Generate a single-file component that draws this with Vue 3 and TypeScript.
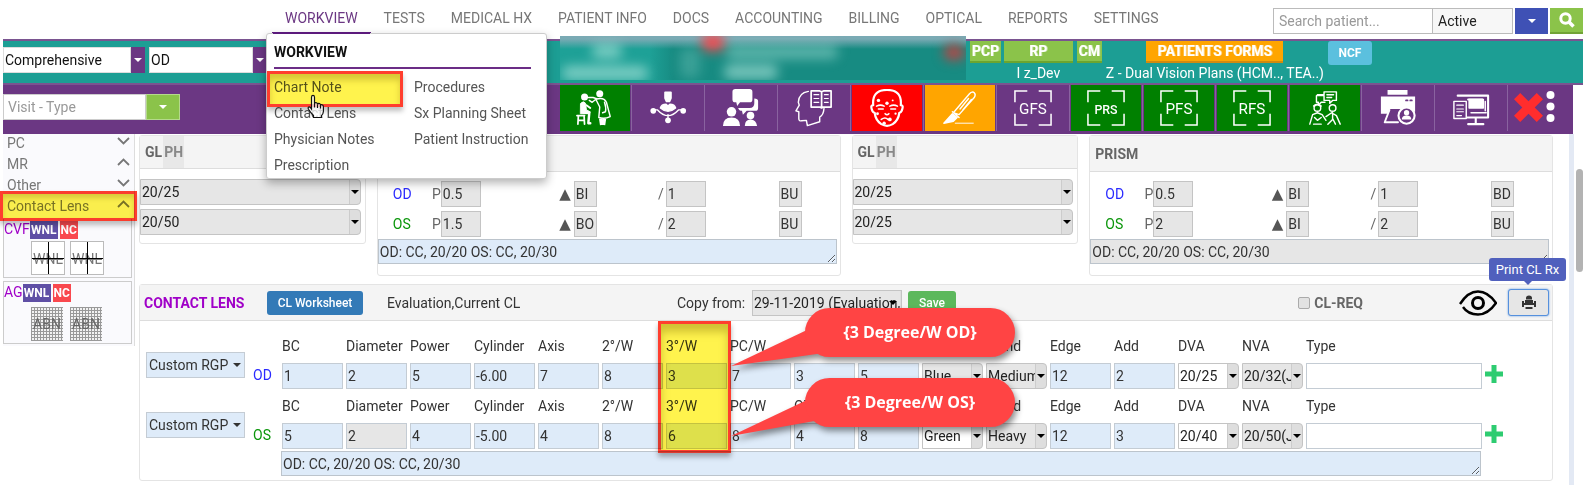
<script setup lang="ts">
import { ref } from 'vue'

interface Field {
  label: string
  value: string
  kind?: 'combo' | 'plain'
  grey?: boolean
}
interface Prism { eye: string; p: string; h: string; v: string; dir: string }

const navItems = ['WORKVIEW', 'TESTS', 'MEDICAL HX', 'PATIENT INFO', 'DOCS', 'ACCOUNTING', 'BILLING', 'OPTICAL', 'REPORTS', 'SETTINGS']
const menuLeft = ['Chart Note', 'Contact Lens', 'Physician Notes', 'Prescription']
const menuRight = ['Procedures', 'Sx Planning Sheet', 'Patient Instruction']

const tools: { id: string; tone?: string; text?: string }[] = [
  { id: 'exam', tone: 'green' },
  { id: 'network' },
  { id: 'chat' },
  { id: 'education' },
  { id: 'face', tone: 'red' },
  { id: 'scalpel', tone: 'orange' },
  { id: 'frame', text: 'GFS' },
  { id: 'frame', text: 'PRS', tone: 'green' },
  { id: 'frame', text: 'PFS', tone: 'green' },
  { id: 'frame', text: 'RFS', tone: 'green' },
  { id: 'talk', tone: 'green' },
  { id: 'printer' },
  { id: 'monitor' },
]

const sections = [
  { name: 'PC', open: false },
  { name: 'MR', open: true },
  { name: 'Other', open: false },
  { name: 'Contact Lens', open: true },
]

const acuity = [['20/25', '20/50'], ['20/25', '20/25']]
const prisms: Prism[][] = [
  [
    { eye: 'OD', p: '0.5', h: 'BI', v: '1', dir: 'BU' },
    { eye: 'OS', p: '1.5', h: 'BO', v: '2', dir: 'BU' },
  ],
  [
    { eye: 'OD', p: '0.5', h: 'BI', v: '1', dir: 'BD' },
    { eye: 'OS', p: '2', h: 'BI', v: '2', dir: 'BU' },
  ],
]
const summary = 'OD: CC, 20/20 OS: CC, 20/30'

const labels = ['BC', 'Diameter', 'Power', 'Cylinder', 'Axis', '2°/W', '3°/W', 'PC/W', 'OZ', 'CT', 'Color', 'Blend', 'Edge', 'Add', 'DVA', 'NVA', 'Type']
const unlabelled = ['CT', 'Color']

function makeRow(values: string[], greyAt: number[]): Field[] {
  return labels.map((label, i) => ({
    label,
    value: values[i] ?? '',
    kind: [10, 11, 14, 15].includes(i) ? 'combo' : i === 16 ? 'plain' : undefined,
    grey: greyAt.includes(i),
  }))
}

const lensRows = ref([
  { eye: 'OD', fields: makeRow(['1', '2', '5', '-6.00', '7', '8', '3', '7', '3', '5', 'Blue', 'Medium', '12', '2', '20/25', '20/32(J2)', ''], [10, 11, 15]) },
  { eye: 'OS', fields: makeRow(['5', '2', '4', '-5.00', '4', '8', '6', '8', '4', '8', 'Green', 'Heavy', '12', '3', '20/40', '20/50(J5)', ''], [1, 11, 15]) },
])
</script>

<template>
  <div class="page">
    <header class="topbar">
      <nav class="nav">
        <a v-for="(item, i) in navItems" :key="item" href="#" :class="{ active: i === 0 }">{{ item }}</a>
        <div class="menu">
          <h2>WORKVIEW</h2>
          <div class="menu-cols">
            <div><a v-for="m in menuLeft" :key="m" href="#">{{ m }}</a></div>
            <div><a v-for="m in menuRight" :key="m" href="#">{{ m }}</a></div>
          </div>
          <div class="mark mark-menu"></div>
          <svg class="cursor" width="20" height="26" viewBox="0 0 20 26">
            <path d="M4.500 15V3.200Q4.600 1.300 6 1.300T7.500 3.200V10Q8 8.300 9.500 8.800Q10.500 9.200 10.500 10.500Q11.200 9 12.600 9.500Q13.500 10 13.500 11.300Q14.400 10.300 15.500 11Q16.500 11.600 16.400 13V17.500Q16.200 20 14.500 21.500V23.500H6.500V21.500Q3.500 18.500 1.500 15.200Q.6 13.500 1.800 13Q3 12.600 4.500 15Z" fill="rgba(255,255,255,.75)" stroke="#111" stroke-width="1.200" />
            <path d="M10.500 10.500V14M13.500 11.500V14.500M7.500 10V13.500" stroke="#111" stroke-width="1.200" />
          </svg>
        </div>
      </nav>
      <form class="search" @submit.prevent>
        <input type="text" placeholder="Search patient..." aria-label="Search patient" />
        <select aria-label="Patient status"><option>Active</option></select>
        <button type="button" class="blue" aria-label="Search options"><i class="caret"></i></button>
        <button type="submit" class="lime" aria-label="Search">
          <svg width="16" height="16" viewBox="0 0 16 16" fill="none" stroke="#fff"><circle cx="6.500" cy="6.500" r="4.700" stroke-width="3" /><path d="M10 10l4.500 4.500" stroke-width="3.500" /></svg>
        </button>
      </form>
    </header>

    <div class="patient">
      <span class="pick exam-type"><select aria-label="Exam type"><option>Comprehensive</option></select><i class="caret"></i></span>
      <span class="pick eye-side"><select aria-label="Eye"><option>OD</option></select><i class="caret"></i></span>
      <div class="hidden-info">
        <div class="smear">
          <i class="s1"></i><i class="s2"></i><i class="s3"></i><i class="s4"></i><i class="s5"></i><i class="s6"></i><i class="s7"></i>
        </div>
      </div>
      <div class="info">
        <button type="button" class="tag pcp">PCP</button>
        <div class="stack rp"><button type="button" class="tag">RP</button><span>I z_Dev</span></div>
        <button type="button" class="tag cm">CM</button>
        <div class="stack forms"><button type="button" class="tag orange">PATIENTS FORMS</button><span>Z - Dual Vision Plans (HCM.., TEA..)</span></div>
        <button type="button" class="ncf">NCF</button>
      </div>
    </div>

    <div class="toolbar">
      <div class="visit">
        <input type="text" placeholder="Visit - Type" aria-label="Visit type" />
        <button type="button" aria-label="Choose visit type"><i class="caret"></i></button>
      </div>
      <div class="tools">
        <div v-for="(t, i) in tools" :key="i" class="cell">
          <button type="button" :class="t.tone" :aria-label="t.text ?? t.id">
            <svg width="40" height="40" viewBox="0 0 40 40" fill="none" stroke="#fff" stroke-width="1.500" stroke-linecap="round" stroke-linejoin="round">
              <g v-if="t.id === 'exam'">
                <circle cx="9" cy="8.500" r="3.700" fill="#fff" stroke="none" />
                <path d="M5 15q3-3 5 0l1 7 4 2-1 2-9 0z" fill="#fff" stroke-width="1" /><path d="M8 25h6l-1 11h2" stroke-width="2.600" /><path d="M11 17l4 3" stroke-width="2" />
                <path d="M1 28h8M2.500 28L2 37M8.500 28L9 37M2.500 33h6" stroke-width="1.800" />
                <circle cx="25" cy="5" r="3.700" fill="#fff" stroke="none" />
                <path d="M13 9h5l3 1M22 10l-5 4-3-2M21 11q8-3 11 3l4 15q-6 3-12 1l1-11-4-8" />
                <path d="M30 14q2 6 1 10l-3 1" /><path d="M26 31l1 7M30 31l-1 7" stroke-width="3.600" stroke-linecap="butt" />
              </g>
              <g v-else-if="t.id === 'network'">
                <path d="M17 3.500h6v6l-1.500 3.500h-3l-1.500-3.500z" fill="#fff" stroke-width="2" />
                <path d="M12 20q1-4 6-4l2 2 2-2q5 0 6 4-8 7-16 0" fill="#fff" /><path d="M4 22h5q11 12 22 0h5M20 27v6" />
                <g fill="#fff" stroke="none"><circle cx="4.500" cy="23" r="3" /><circle cx="36" cy="23" r="3" /><circle cx="20" cy="33" r="3" /></g>
              </g>
              <g v-else-if="t.id === 'chat'" fill="#fff" stroke="none">
                <path d="M14 0h15q3 0 3 3v8q0 3-3 3H19l-3 4-1-4h-1q-3 0-3-3V3q0-3 3-3z" />
                <path d="M34 10q4 0 4 3v7q0 3-3 3h-9l-4 4-1-4q-3 0-4-3h12q5 0 5-5z" />
                <circle cx="10" cy="24" r="5" /><path d="M1 39q0-9 9-9t9 9z" /><circle cx="30" cy="28" r="4" /><path d="M24 39q0-7 6-7t7 7z" />
              </g>
              <g v-else-if="t.id === 'education'">
                <path d="M14 2.500Q4 4 3.500 14l1 3-3.500 6 3 1v7q0 3 3 2.500l5-.5 1 5.500 13-4v-5q4-2 4.500-9" />
                <path d="M17 2h9l2 1 2-1h8v17h-8l-2 1-2-1h-9zM28 3v17" stroke-width="1.800" /><path d="M20 6h5M20 10h5M20 14h5M31 6h4M31 10h4M31 14h4" stroke-width="1.300" />
              </g>
              <g v-else-if="t.id === 'face'">
                <path d="M5.500 17Q4 1 20 1t14.500 16M5.500 17q-3 0-1.500 4.500 1 3.500 3 3.500 1 8 7 12 6 3.500 12 0 6-4 7-12 2 0 3-3.500 1.500-4.500-1.500-4.500" stroke-width="2.300" />
                <path d="M9 18q4-2 8 0M23 18q4-2 8 0M11 21h5M24 21h5M18 26q2 2 4 0M14 32q4-3 7 0" stroke-width="1.700" />
                <g fill="#fff" stroke="none"><circle cx="11" cy="12" r="1.800" /><circle cx="20" cy="15" r="1.800" /><circle cx="26" cy="12" r="1" /><circle cx="10" cy="26" r="1.500" /><circle cx="23" cy="32" r="2" /><circle cx="17" cy="36" r="1.800" /><circle cx="29" cy="26" r="1.200" /></g>
              </g>
              <g v-else-if="t.id === 'scalpel'">
                <path d="M13 25L30 5q3-3 5-1t0 5L19 27zM12 24l7 6M20 21l9-11M23 22L32 11" /><path d="M3 36l9-10 5 4-4 4z" fill="#fff" /><path d="M15 36h19" stroke-width="1" />
              </g>
              <g v-else-if="t.id === 'frame'">
                <path d="M1 14V2h13M26 2h13v12M39 26v12H26M14 38H1V26" stroke-linecap="butt" stroke-linejoin="miter" stroke-width="1.600" />
                <text x="20" y="26" text-anchor="middle" fill="#fff" stroke="none" :class="{ small: t.text === 'PRS' }">{{ t.text }}</text>
              </g>
              <g v-else-if="t.id === 'talk'">
                <path d="M16 5v-1h7V1h13v9h-4l-3 3v-3h-6V5h-8v7h2v3l3-3h4M26 4h7M26 7h5" transform="translate(-4 2)" />
                <circle cx="12" cy="20" r="3.500" /><circle cx="28" cy="20" r="3.500" /><path d="M8 18q4-4 8 0" />
                <path d="M4 37l3-10 5-2 5 2 4 6M9 30l3 3 4-3M8 37h8M21 29l6-4 5 3 4 9M28 25v7l-5 5M28 31l3 6" />
              </g>
              <g v-else-if="t.id === 'printer'">
                <path d="M9 1h21v5H9zM2 8h36v16H29l-2-3H11l-2 5H2z" fill="#fff" stroke="none" />
                <path d="M11 22L6 35h14" stroke-width="2" /><path d="M28.500 12h1.500M33 12h1.500" stroke="#6b3783" stroke-width="2" />
                <circle cx="29" cy="28" r="8.500" fill="#6b3783" stroke-width="2.200" /><circle cx="29" cy="25" r="2.800" fill="#fff" stroke="none" /><path d="M24 32q0-4 5-4t5 4z" fill="#fff" stroke="none" />
              </g>
              <g v-else>
                <path d="M6 7h32v23H17M17 11h15M15 30h23M25 30v7M17 37h16" stroke-width="2.200" /><path d="M18 11h15v9H18z" fill="#fff" /><path d="M35 13v10M20 25h16" />
                <path d="M2 13h13v18H2z" fill="#6b3783" /><path d="M5 17h7M5 21h7M5 24h7M5 28h5" stroke-width="1.200" />
              </g>
            </svg>
          </button>
        </div>
        <div class="end">
          <button type="button" aria-label="Close"><svg width="29" height="29" viewBox="0 0 28 28"><path d="M6 0l8 8 8-8 6 6-8 8 8 8-6 6-8-8-8 8-6-6 8-8-8-8z" fill="#ff2d2d" /></svg></button>
          <button type="button" aria-label="More"><svg width="9" height="32" viewBox="0 0 8 32" fill="#fff"><circle cx="4" cy="4" r="4" /><circle cx="4" cy="15.500" r="4" /><circle cx="4" cy="27" r="4" /></svg></button>
        </div>
      </div>
    </div>

    <div class="content">
      <aside class="side">
        <div class="sections">
          <button v-for="s in sections" :key="s.name" type="button">
            {{ s.name }}
            <svg width="13" height="8" viewBox="0 0 13 8" fill="none" stroke="#777" stroke-width="1.800"><path :d="s.open ? 'M1 7l5.500-5.500L12 7' : 'M1 1l5.500 5.500L12 1'" /></svg>
          </button>
          <div class="mark mark-side"></div>
        </div>
        <div class="box">
          <div class="box-head"><b>CVF</b><button type="button" class="wnl">WNL</button><button type="button" class="nc">NC</button></div>
          <div class="tiles"><span v-for="n in 2" :key="n" class="tile cross">WNL</span></div>
        </div>
        <div class="box">
          <div class="box-head"><b>AG</b><button type="button" class="wnl">WNL</button><button type="button" class="nc">NC</button></div>
          <div class="tiles"><span v-for="n in 2" :key="n" class="tile mesh">ABN</span></div>
        </div>
      </aside>

      <main class="main">
        <div class="panels">
          <template v-for="(set, i) in prisms" :key="i">
            <section class="panel glare">
              <div class="head"><b>GL</b><b class="ph">PH</b></div>
              <div class="glare-body">
                <span v-for="(v, k) in acuity[i]" :key="k" class="combo grey"><select :aria-label="'GL ' + (k ? 'OS' : 'OD')"><option>{{ v }}</option></select><i class="caret"></i></span>
              </div>
            </section>
            <section class="panel prism">
              <div class="head"><b>PRISM</b></div>
              <div class="prism-body">
                <div v-for="r in set" :key="r.eye" class="prism-row">
                  <span :class="['eye', r.eye]">{{ r.eye }}</span>
                  <label class="g1"><span>P</span><input class="w40" type="text" :value="r.p" /></label>
                  <label class="g2"><span class="up">▲</span><input class="w23" type="text" :value="r.h" /></label>
                  <label class="g3"><span>/</span><input class="w40" type="text" :value="r.v" /></label>
                  <input class="w23 dir" type="text" :value="r.dir" aria-label="Vertical base" />
                </div>
              </div>
              <textarea :class="{ grey: i === 1 }" aria-label="Prism summary" :value="summary"></textarea>
            </section>
          </template>
        </div>

        <section class="panel lens">
          <div class="lens-head">
            <h3>CONTACT LENS</h3>
            <button type="button" class="worksheet">CL Worksheet</button>
            <span class="evaluation">Evaluation,Current CL</span>
            <label class="copy" for="copy">Copy from:</label>
            <span class="combo grey copy-pick"><select id="copy"><option>29-11-2019 (Evaluation,Current CL)</option></select><i class="caret"></i></span>
            <button type="button" class="save">Save</button>
            <label class="req"><input type="checkbox" />CL-REQ</label>
            <svg class="eye-icon" width="38" height="26" viewBox="0 0 38 26" fill="none" stroke="#000" stroke-width="2.400"><path d="M1 14Q9 1.500 19 1.500T37 13Q29 24.500 19 24.500 9 24.500 4 17" /><circle cx="19" cy="13" r="5.500" stroke-width="3" /></svg>
            <div class="print-wrap">
              <button type="button" class="print" aria-label="Print CL Rx">
                <svg width="16" height="16" viewBox="0 0 16 16" fill="#333"><path d="M5 4.500V3q0-2.500 3-2.500T11 3v1.500zM1 6h2v2h10V6h2v6h-2V10H3v2H1zM4 5h8v3H4zM4.500 12h7v2h-7z" /></svg>
              </button>
              <div class="tip" role="tooltip">Print CL Rx</div>
            </div>
          </div>
          <div class="lens-body">
            <div v-for="row in lensRows" :key="row.eye" class="lens-row">
              <button type="button" class="brand">Custom RGP<i class="caret"></i></button>
              <span :class="['eye', row.eye]">{{ row.eye }}</span>
              <div class="fields">
                <div v-for="f in row.fields" :key="f.label" class="field">
                  <label :for="row.eye + f.label" :aria-label="f.label">{{ unlabelled.includes(f.label) ? '&nbsp;' : f.label }}</label>
                  <span v-if="f.kind === 'combo'" :class="['combo', { grey: f.grey }]"><input :id="row.eye + f.label" v-model="f.value" type="text" /><i class="caret"></i></span>
                  <input v-else :id="row.eye + f.label" v-model="f.value" type="text" :class="{ grey: f.grey, plain: f.kind === 'plain' }" />
                </div>
              </div>
              <button type="button" class="plus" aria-label="Add lens"><svg width="18" height="18" viewBox="0 0 18 18"><path d="M6.500 0h5v6.500H18v5h-6.500V18h-5v-6.500H0v-5h6.500z" fill="#2ecc71" /></svg></button>
            </div>
            <textarea class="notes" aria-label="Lens summary" :value="summary"></textarea>
            <div class="mark mark-col"></div>
            <div class="callout first"><svg width="120" height="60" viewBox="0 0 120 60"><path d="M0 58L76 22 100 44Z" fill="#ff4444" /></svg><span>{3 Degree/W OD}</span></div>
            <div class="callout second"><svg width="120" height="60" viewBox="0 0 120 60"><path d="M0 58L76 22 100 40Z" fill="#ff4444" /></svg><span>{3 Degree/W OS}</span></div>
          </div>
        </section>
      </main>
      <div class="rail"></div>
    </div>
  </div>
</template>

<style>
body { margin: 0; background: #fff; overflow: hidden; }
</style>

<style scoped>
* { box-sizing: border-box; }
.page { font-family: Roboto, "Liberation Sans", sans-serif; font-size: 14px; line-height: 20px; color: #333; }
button, input, select, textarea { font: inherit; color: inherit; margin: 0; padding: 0; border: 0; border-radius: 0; outline: 0; }
button { background: none; cursor: pointer; }
select { appearance: none; }
a { color: inherit; text-decoration: none; }
.caret { display: block; border: 4px solid transparent; border-top-color: currentColor; border-bottom-width: 0; width: 0; height: 0; pointer-events: none; flex: none; }

.topbar { display: flex; justify-content: space-between; height: 39px; padding-left: 272px; }
.nav { position: relative; display: flex; height: 34px; }
.nav > a { padding: 8px 13px 4px; color: #777; white-space: nowrap; border-bottom: 2px solid transparent; }
.nav > a.active { color: #6b3783; border-color: #5b1a7c; }
.menu { position: absolute; z-index: 5; left: -6px; top: 33px; width: 281px; height: 146px; background: #fff; border: 1px solid #ccc; border-radius: 3px; box-shadow: 0 4px 10px rgba(0, 0, 0, .3); padding: 8px 15px 0 7px; }
.menu::before { content: ""; position: absolute; left: 6px; top: -2px; width: 97px; height: 2px; background: #5b1a7c; }
.menu h2 { margin: 0; font-size: 14px; line-height: 20px; font-weight: 700; color: #111; padding-bottom: 5px; border-bottom: 2px solid #6b2d86; }
.menu-cols { display: grid; grid-template-columns: 140px 1fr; padding-top: 5px; }
.menu-cols a { display: block; line-height: 26px; color: #555; white-space: nowrap; }
.mark { position: absolute; border: 3px solid #ff3e2e; background: #fff34d; mix-blend-mode: multiply; box-shadow: inset 0 6px 6px rgba(120, 100, 0, .25); pointer-events: none; }
.mark-menu { left: 0; top: 37px; width: 136px; height: 36px; box-shadow: inset 0 6px 6px rgba(120, 100, 0, .3), 0 4px 5px rgba(0, 0, 0, .25); }
.cursor { position: absolute; left: 40px; top: 60px; }

.search { display: flex; padding: 8px 0 5px; height: 39px; }
.search input { width: 160px; border: 1px solid #bbb; padding-left: 5px; }
.search input::placeholder, .visit input::placeholder { color: #999; opacity: 1; }
.search select { width: 80px; border: 1px solid #bbb; border-left: 0; background: #f7f7f7; padding-left: 5px; color: #222; }
.search button { width: 33px; margin-left: 2px; display: grid; place-items: center; color: #fff; }
.search .blue { background: #3f51b5; }
.search .lime { background: #8bc34a; border-bottom: 2px solid #71a336; }

.patient { position: relative; display: flex; align-items: flex-start; height: 46px; margin-left: 3px; background: #1c9e94; border-top: 2px solid #7a5490; border-bottom: 2px solid #7a5490; }
.pick { display: flex; align-items: center; height: 26px; margin: 6px 4px 0 0; background: #6b3783; color: #fff; padding-right: 3px; }
.pick select { flex: 1; height: 26px; background: #fff; color: #111; border: 1px solid #ddd; padding-left: 1px; margin-right: 3px; }
.exam-type { width: 142px; }
.eye-side { width: 118px; }
.hidden-info { position: absolute; left: 557px; top: -5px; width: 406px; height: 44px; overflow: hidden; background: linear-gradient(#7aaab4 0, #7aaab4 3px, rgba(28, 150, 140, 0) 13px), linear-gradient(90deg, #1ea197 22%, #178b82 28%); }
.smear { position: absolute; inset: 0; filter: blur(6px); }
.smear i { position: absolute; border-radius: 6px; background: rgba(165, 225, 215, .7); }
.smear .s1 { left: 32px; top: 8px; width: 30px; height: 14px; }
.smear .s2 { left: 2px; top: 30px; width: 86px; height: 14px; }
.smear .s3 { left: 120px; top: 12px; width: 20px; height: 30px; opacity: .35; }
.smear .s4 { left: 166px; top: 9px; width: 112px; height: 14px; opacity: .7; }
.smear .s5 { left: 164px; top: 29px; width: 54px; height: 14px; }
.smear .s6 { left: 142px; top: -2px; width: 22px; height: 17px; background: #f24a50; }
.smear .s7 { left: 384px; top: 9px; width: 20px; height: 15px; background: #b84444; }
.info { display: flex; align-items: flex-start; margin-left: auto; margin-right: 211px; color: #fff; }
.tag { height: 22px; background: #8bc34a; border-bottom: 2px solid #6ca52f; font-weight: 700; line-height: 20px; text-align: center; text-shadow: 1px 0 0 rgba(255, 255, 255, .5); }
.pcp { width: 31px; margin-right: 3px; }
.rp { width: 69px; margin-right: 4px; }
.rp .tag { width: 69px; }
.cm { width: 25px; margin-right: 4px; }
.stack { display: flex; flex-direction: column; align-items: center; white-space: nowrap; }
.stack span { line-height: 20px; }
.forms { min-width: 217px; }
.tag.orange { width: 137px; background: #ffa500; border-color: #d08a10; }
.ncf { width: 44px; height: 24px; margin-left: 4px; background: #5bc0de; border-radius: 3px; font-size: 12px; font-weight: 700; }

.toolbar { display: flex; justify-content: space-between; height: 49px; margin: 0 10px 0 3px; background: #6b3783; }
.visit { display: flex; height: 26px; margin-top: 9px; width: 177px; }
.visit input { flex: 1; min-width: 0; border: 1px solid #ccc; padding-left: 4px; background: #fff; }
.visit button { width: 34px; display: grid; place-items: center; background: #8bc34a; border: 1px solid #b5d98c; color: #fff; }
.tools { display: flex; }
.cell { width: 73px; border-right: 1px solid #8a63a0; padding: 0 1px; height: 46px; }
.cell button { display: grid; place-items: center; width: 100%; height: 46px; }
.cell svg { height: 38px; width: 38px; }
.cell text { font-size: 16px; }
.cell text.small { font-size: 13px; font-weight: 500; }
.green { background: #008000; }
.red { background: #f00; }
.orange { background: #ffa500; }
.end { display: flex; width: 65px; padding: 6px 8px 0 6px; gap: 3px; align-items: flex-start; }
.end button { height: 32px; display: grid; place-items: center; }

.content { position: relative; display: flex; align-items: stretch; height: 351px; }
.side { width: 132px; margin-left: 3px; background: #fafafd; border-right: 1px solid #ddd; height: 212px; flex: none; }
.sections { position: relative; height: 85px; }
.sections button { display: flex; width: 100%; height: 21px; align-items: center; justify-content: space-between; color: #777; padding: 0 4px 3px; }
.sections button svg { margin-bottom: 4px; }
.mark-side { left: -3px; top: 57px; width: 137px; height: 30px; box-shadow: inset 0 4px 5px rgba(120, 100, 0, .25), 0 4px 5px rgba(0, 0, 0, .25); }
.box { width: 129px; border: 1px solid #ccc; height: 63px; margin-bottom: 3px; }
.box:nth-child(2) { height: 59px; border-top: 0; }
.box-head { display: flex; align-items: flex-start; padding: 2px 0 0; line-height: 17px; }
.box-head b { font-weight: 400; color: #a000c8; -webkit-text-stroke: 0; }
.box-head button { height: 18px; font-size: 12px; line-height: 18px; font-weight: 700; color: #fff; text-align: center; }
.wnl { width: 28px; background: #5f4fa5; margin-right: 2px; }
.nc { width: 18px; background: #f9484e; }
.tiles { display: flex; gap: 5px; padding: 2px 0 0 27px; }
.box:last-child .tiles { padding-top: 5px; }
.tile { position: relative; width: 34px; height: 34px; border: 1px solid #bbb; text-align: center; line-height: 34px; color: #777; background: #fff; overflow: hidden; text-decoration: line-through; }
.cross::before { content: ""; position: absolute; left: 16px; top: 0; width: 1px; height: 34px; background: #000; }
.cross::after { content: ""; position: absolute; left: 0; top: 16px; width: 34px; height: 1px; background: #000; }
.mesh { border: 0; width: 32px; margin-right: 2px; text-decoration: none; color: #666; background: repeating-linear-gradient(#999 0 1px, transparent 1px 3px), repeating-linear-gradient(90deg, #999 0 1px, #f2f2f2 1px 3px); }

.main { flex: 1; min-width: 0; padding: 1px 30px 0 4px; }
.panels { display: grid; grid-template-columns: 227fr 464fr 227fr 464fr; gap: 11px; align-items: start; height: 149px; }
.panel { border: 1px solid #e4e4e4; border-radius: 3px; min-width: 0; }
.head { display: flex; align-items: center; height: 33px; background: #f4f4f4; border-bottom: 1px solid #ddd; padding-left: 5px; font-size: 14px; color: #666; }
.head .ph { background: #e8e8e8; color: #888; line-height: 32px; padding: 0 1px; margin-left: 1px; }
.prism .head { height: 36px; }
.glare-body { display: grid; gap: 4px; padding: 10px 4px 8px 0; }
.combo { position: relative; display: flex; align-items: center; height: 26px; background: #dedede; border: 1px solid #c4c4c4; border-radius: 0 4px 4px 0; color: #000; padding-right: 1px; min-width: 0; }
.combo select, .combo input { flex: 1; min-width: 0; width: 0; height: 24px; border-right: 1px solid #ccc; background: #fff; color: #222; padding-left: 1px; margin-right: 1px; }
.combo.grey select, .combo.grey input { background: #e6e6e6; }
.prism-body { padding-top: 7px; }
.prism-row { display: flex; align-items: center; height: 30px; padding: 0 38px 0 15px; color: #666; }
.prism-row input { height: 26px; border: 1px solid #c4c4c4; background: #e6e6e6; color: #333; padding-left: 1px; }
.w40 { width: 40px; }
.w23 { width: 23px; }
.OD { color: #2a2aff; }
.OS { color: #0a960a; }
.prism-row .eye { width: 39px; }
.prism-row label { display: flex; align-items: center; }
.prism-row label span { text-align: right; }
.g1 span { width: 9px; }
.g2 .up { font-family: "DejaVu Sans", sans-serif; font-size: 15px; color: #555; }
.g2 span { width: 14px; margin-right: 3px; }
.g3 span { width: 6px; margin-right: 2px; }
.g2 { margin-left: 76px; }
.g3 { margin-left: 61px; }
.dir { margin-left: auto; }
textarea { display: block; border: 1px solid #bcc4cc; background: #deebf9; color: #333; height: 25px; line-height: 20px; padding: 2px 1px; resize: vertical; overflow: hidden; }
.prism textarea { width: calc(100% - 3px); margin-bottom: 11px; }
textarea.grey, input.grey { background: #e6e6e6; }

.lens-head { display: flex; align-items: center; height: 36px; background: #f4f4f4; border-bottom: 1px solid #ddd; padding: 0 3px 0 4px; color: #333; white-space: nowrap; }
.lens-head h3 { margin: 0; width: 123px; font-size: 14px; font-weight: 700; color: #a000c8; }
.worksheet { width: 96px; height: 24px; background: #337ab7; border-radius: 3px; color: #fff; font-size: 12px; font-weight: 500; }
.evaluation { margin-left: 24px; width: 290px; }
.copy { width: 75px; }
.copy-pick { width: 150px; border-radius: 0; }
.combo.copy-pick select { border: 0; margin: 0; }
.copy-pick .caret { position: absolute; right: 4px; }
.save { width: 48px; height: 24px; margin-left: 6px; background: #5cb85c; border-radius: 3px; color: #fff; font-size: 12px; font-weight: 500; }
.req { display: flex; align-items: center; gap: 4px; margin-left: auto; font-weight: 700; color: #666; }
.req input { width: 12px; height: 12px; appearance: none; border: 1px solid #aaa; border-radius: 2px; background: #e2e2e2; }
.eye-icon { margin: 0 11px 0 96px; }
.print-wrap { position: relative; }
.print { display: grid; place-items: center; width: 41px; height: 27px; border: 1px solid #5590dd; border-radius: 3px; background: #e6e6e6; box-shadow: 0 0 2px #5590dd; }
.tip { position: absolute; z-index: 3; right: -17px; bottom: 35px; width: 77px; height: 23px; background: #5060bd; border-radius: 3px; color: #fff; font-size: 13px; line-height: 23px; text-align: center; }
.tip::after { content: ""; position: absolute; left: 35px; top: 23px; border: 4px solid transparent; border-top-color: #5060bd; border-bottom: 0; }

.lens-body { position: relative; padding: 12px 3px 4px 6px; }
.lens-row { display: flex; height: 60px; }
.brand { display: flex; align-items: center; gap: 5px; width: 99px; height: 26px; margin-top: 19px; padding-left: 2px; background: #deebf9; border: 1px solid #c4ccd4; white-space: nowrap; flex: none; }
.lens-row > .eye { width: 37px; padding: 32px 0 0 8px; flex: none; }
.fields { flex: 1; display: grid; grid-template-columns: repeat(16, 61px) 1fr; gap: 3px; min-width: 0; }
.field { min-width: 0; }
.field label { display: block; line-height: 20px; padding: 3px 0 7px; white-space: nowrap; color: #333; }
.field > input { display: block; width: 100%; height: 26px; border: 1px solid #c4ccd4; background: #deebf9; padding-left: 1px; color: #333; }
.field > input.grey { background: #e6e6e6; }
.field > input.plain { background: #fff; }
.plus { width: 18px; height: 18px; margin: 32px 46px 0 3px; flex: none; }
.notes { width: calc(100% - 203px); margin-left: 135px; margin-top: -2px; }
.mark-col { left: 518px; top: 0; width: 73px; height: 132px; box-shadow: inset 0 8px 8px rgba(120, 100, 0, .35), 0 4px 5px rgba(0, 0, 0, .3); }
.callout { position: absolute; left: 665px; width: 210px; height: 49px; filter: drop-shadow(2px 4px 3px rgba(0, 0, 0, .45)); color: #fff; }
.callout span { position: relative; display: block; height: 49px; line-height: 48px; border-radius: 25px; background: #ff4444; text-align: center; font-family: "Open Sans", sans-serif; font-weight: 700; font-size: 16px; }
.callout svg { position: absolute; left: -74px; top: 0; }
.first { top: -13px; }
.second { top: 57px; }

.rail { position: absolute; right: 0; top: 0; width: 14px; height: 351px; background: linear-gradient(90deg, #e3e9f4 5px, #fff 5px); }
.rail::after { content: ""; position: absolute; right: 0; top: 35px; width: 7px; height: 103px; background: #b3b3b3; border-radius: 4px; }
</style>
